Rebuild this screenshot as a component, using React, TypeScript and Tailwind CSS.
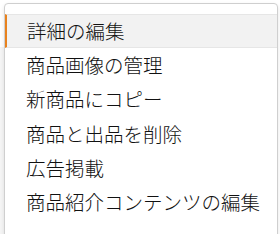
import React from "react";

const items = [
  "詳細の編集",
  "商品画像の管理",
  "新商品にコピー",
  "商品と出品を削除",
  "広告掲載",
  "商品紹介コンテンツの編集",
];

export default function App() {
  return (
    <div className="relative w-[280px] h-[234px] overflow-hidden bg-white" style={{ fontFamily: '"Noto Sans CJK JP", "Noto Sans", sans-serif' }}>
      <div className="absolute left-0 top-[47px] w-[4px] h-[200px] bg-[#f5f5f5]" />
      <div className="absolute left-[4px] top-[3px] w-[274px] h-[240px] rounded-[4px] border border-[#cfcfcf] bg-white pt-[10px] shadow-[0_2px_4px_rgba(0,0,0,0.10)]">
        {items.map((t, i) => (
          <div
            key={i}
            className={
              i === 0
                ? "h-[34.4px] flex items-center pl-[21px] bg-[#f2f2f2] border-l-2 border-[#e8821e] border-y border-y-[#e6e6e6] text-[19.5px] font-light text-[#111] leading-none"
                : "h-[34.4px] flex items-center pl-[21px] text-[19.5px] font-light text-[#111] leading-none"
            }
          >
            <span className={i === 0 ? "-ml-[1px] -mt-[1px]" : "-mt-[2px]"}>{t}</span>
          </div>
        ))}
      </div>
    </div>
  );
}
